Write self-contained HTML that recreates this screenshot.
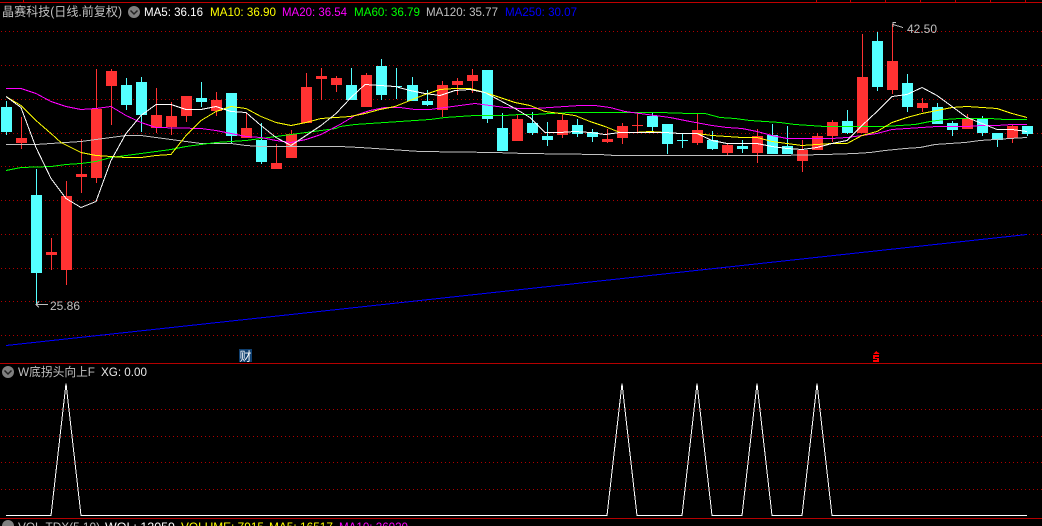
<!DOCTYPE html>
<html><head><meta charset="utf-8"><style>
html,body{margin:0;padding:0;background:#000;width:1042px;height:526px;overflow:hidden}
svg{display:block}
text{font-family:"Liberation Sans","WenQuanYi Zen Hei","Noto Sans CJK SC",sans-serif;font-size:12px}
</style></head><body>
<svg width="1042" height="526" viewBox="0 0 1042 526" xmlns="http://www.w3.org/2000/svg">
<rect width="1042" height="526" fill="#000"/>
<g shape-rendering="crispEdges">
<path fill="#c00000" d="M0 2h1042v1H0zM23 0h1v2h-1zM816 0h1v2h-1zM850 0h1v2h-1zM885 0h1v2h-1zM920 0h1v2h-1zM955 0h1v2h-1zM990 0h1v2h-1zM1025 0h1v2h-1z"/>
<path fill="#b40000" d="M0 363h1042v1H0zM0 518h1042v1H0z"/>
<g stroke="#b00000" stroke-width="1" stroke-dasharray="1 3">
<path d="M1 31.5H1042M1 65.5H1042M1 99.5H1042M1 133.5H1042M1 166.5H1042M1 200.5H1042M1 234.5H1042M1 268.5H1042M1 301.5H1042M1 335.5H1042M1 409.5H1042M1 436.5H1042M1 462.5H1042M1 489.5H1042"/>
</g>
<path fill="#54ffff" d="M1 107h11v25h-11zM6 101h1v34h-1zM31 195h11v78h-11zM36 169h1v135h-1zM121 85h11v20h-11zM126 78h1v32h-1zM136 82h11v33h-11zM141 77h1v55h-1zM196 98h11v4h-11zM201 82h1v25h-1zM226 93h11v43h-11zM231 93h1v50h-1zM256 140h11v22h-11zM261 123h1v41h-1zM346 85h11v15h-11zM351 68h1v32h-1zM376 66h11v29h-11zM381 59h1v41h-1zM391 86h11v1h-11zM396 68h1v31h-1z"/>
<path fill="#54ffff" transform="translate(1 0)" d="M406 85h11v16h-11zM411 77h1v24h-1zM421 101h11v4h-11zM426 90h1v16h-1zM481 70h11v49h-11zM486 70h1v53h-1zM496 128h11v23h-11zM501 113h1v38h-1zM526 123h11v10h-11zM531 112h1v23h-1zM541 136h11v4h-11zM546 122h1v24h-1zM571 125h11v9h-11zM576 119h1v18h-1zM586 132h11v5h-11zM591 129h1v13h-1zM646 116h11v11h-11zM651 112h1v19h-1zM661 124h11v20h-11zM666 124h1v30h-1zM676 140h11v1h-11zM681 133h1v15h-1zM706 140h11v9h-11zM711 131h1v19h-1zM736 146h11v3h-11zM741 140h1v13h-1zM766 135h11v19h-11zM771 124h1v30h-1zM781 146h11v8h-11zM786 126h1v28h-1zM841 121h11v12h-11zM846 110h1v24h-1zM871 41h11v46h-11zM876 32h1v59h-1zM901 83h11v24h-11zM906 74h1v38h-1zM931 107h11v17h-11zM936 103h1v21h-1zM946 123h11v7h-11zM951 121h1v15h-1zM976 119h11v14h-11zM981 116h1v20h-1zM991 133h11v7h-11zM996 133h1v14h-1zM1021 126h11v8h-11zM1026 126h1v10h-1z"/>
<path fill="#ff3232" d="M16 138h11v5h-11zM21 117h1v32h-1zM46 252h11v3h-11zM51 238h1v32h-1zM61 196h11v74h-11zM66 181h1v104h-1zM76 174h11v3h-11zM81 139h1v54h-1zM91 109h11v69h-11zM96 69h1v114h-1zM106 71h11v15h-11zM111 69h1v56h-1zM151 115h11v13h-11zM156 88h1v45h-1zM166 116h11v11h-11zM171 102h1v33h-1zM181 96h11v20h-11zM186 96h1v26h-1zM211 100h11v11h-11zM216 92h1v24h-1zM241 128h11v10h-11zM246 113h1v25h-1zM271 163h11v6h-11zM276 144h1v25h-1zM286 134h11v24h-11zM291 130h1v28h-1zM301 87h11v36h-11zM306 73h1v50h-1zM316 76h11v3h-11zM321 68h1v32h-1zM331 78h11v7h-11zM336 76h1v16h-1zM361 75h11v32h-11zM366 73h1v34h-1z"/>
<path fill="#ff3232" transform="translate(1 0)" d="M436 85h11v25h-11zM441 81h1v36h-1zM451 81h11v4h-11zM456 78h1v17h-1zM466 75h11v6h-11zM471 69h1v24h-1zM511 119h11v22h-11zM516 115h1v26h-1zM556 120h11v15h-11zM561 115h1v23h-1zM601 139h11v3h-11zM606 129h1v14h-1zM616 126h11v12h-11zM621 123h1v21h-1zM631 125h11v1h-11zM636 112h1v21h-1zM691 130h11v13h-11zM696 113h1v32h-1zM721 145h11v8h-11zM726 144h1v11h-1zM751 136h11v17h-11zM756 129h1v34h-1zM796 150h11v11h-11zM801 140h1v32h-1zM811 136h11v14h-11zM816 133h1v17h-1zM826 122h11v14h-11zM831 120h1v22h-1zM856 77h11v56h-11zM861 34h1v99h-1zM886 61h11v29h-11zM891 24h1v70h-1zM916 103h11v5h-11zM921 98h1v14h-1zM961 118h11v11h-11zM966 114h1v15h-1zM1006 126h11v12h-11zM1011 125h1v18h-1z"/>
<g fill="none" stroke-width="1">
<polyline stroke="#0000ff" points="6,345.5 1027,234.5"/>
<polyline stroke="#c0c0c0" points="6,144.5 36,144.5 51,143.5 66,142.5 81,141.5 96,139.5 111,137.5 126,135.5 141,135.5 156,137.5 171,139.5 186,141.5 201,143.5 231,143.5 246,145.5 261,146.5 340,146.5 360,147.5 375,148.5 390,149.5 405,150.5 420,151.5 495,152.5 525,153.5 600,154.5 615,155.5 690,155.5 780,155.5 825,154.5 855,153.5 870,152.5 885,150.5 905,148.5 920,147.5 935,144.5 950,143.5 965,142.5 980,140.5 995,139.5 1010,138.5 1027,137.5"/>
<polyline stroke="#00ff00" points="6,170.5 21,167.5 51,166.5 66,164.5 81,163.5 96,161.5 111,157.5 126,155.5 141,153.5 156,151.5 171,149.5 186,146.5 201,144.5 216,142.5 246,140.5 261,138.5 276,136.5 291,134.5 306,132.5 321,130.5 336,128.5 340,126.5 355,124.5 370,123.5 385,122.5 400,121.5 415,120.5 430,119.5 445,117.5 460,116.5 475,115.5 505,115.5 520,114.5 535,114.5 550,113.5 570,112.5 660,112.5 690,113.5 705,113.5 720,117.5 735,118.5 750,120.5 765,121.5 780,122.5 795,124.5 810,125.5 825,126.5 885,126.5 900,125.5 915,124.5 930,121.5 945,119.5 960,118.5 990,118.5 1005,119.5 1027,119.5"/>
<polyline stroke="#ff00ff" points="6,88.5 21,88.5 36,93.5 51,101.5 66,106.5 81,109.5 96,108.5 111,106.5 126,115.5 141,122.5 156,127.5 201,128.5 216,130.5 231,133.5 246,136.5 261,137.5 276,140.5 291,142.5 306,139.5 321,134.5 340,124.5 355,115.5 370,110.5 385,107.5 400,107.5 415,109.5 430,109.5 445,107.5 460,105.5 475,103.5 490,105.5 505,107.5 520,108.5 535,108.5 550,107.5 565,106.5 580,105.5 595,105.5 610,107.5 625,111.5 640,113.5 655,115.5 670,117.5 690,121.5 712,125.5 727,127.5 742,128.5 757,131.5 772,135.5 787,138.5 832,138.5 847,137.5 862,135.5 877,133.5 892,129.5 907,128.5 922,127.5 937,126.5 967,126.5 982,125.5 997,125.5 1012,124.5 1027,124.5"/>
<polyline stroke="#ffff00" points="6,96.5 21,105.5 36,120.5 51,133.5 61,142.5 81,152.5 96,155.5 111,156.5 126,157.5 141,157.5 156,155.5 171,154.5 186,135.5 201,120.5 216,111.5 231,106.5 246,108.5 261,116.5 276,122.5 291,125.5 306,122.5 321,118.5 336,117.5 350,116.5 365,113.5 380,109.5 395,106.5 410,100.5 425,94.5 440,89.5 455,88.5 470,88.5 485,92.5 500,97.5 515,102.5 530,105.5 545,111.5 560,113.5 575,115.5 590,121.5 605,126.5 620,132.5 635,132.5 650,131.5 665,132.5 680,133.5 697,133.5 712,135.5 727,136.5 742,137.5 757,137.5 772,141.5 787,143.5 802,145.5 817,144.5 832,143.5 847,143.5 862,135.5 877,131.5 892,122.5 907,117.5 922,113.5 937,110.5 952,107.5 967,106.5 982,107.5 997,108.5 1012,113.5 1027,117.5"/>
<polyline stroke="#ffffff" points="6,96.5 21,107.5 36,147.5 51,178.5 66,198.5 81,207.5 96,201.5 111,160.5 126,133.5 141,115.5 156,104.5 171,104.5 186,109.5 201,109.5 216,106.5 231,111.5 246,112.5 261,125.5 276,137.5 291,145.5 306,135.5 321,125.5 336,113.5 351,97.5 365,84.5 380,85.5 395,86.5 410,90.5 425,93.5 440,95.5 455,90.5 470,89.5 485,92.5 500,100.5 515,108.5 530,117.5 545,132.5 560,132.5 575,131.5 590,132.5 605,134.5 620,132.5 665,132.5 680,133.5 697,133.5 712,140.5 727,143.5 742,143.5 757,143.5 772,146.5 787,148.5 802,149.5 817,147.5 832,143.5 847,140.5 862,125.5 877,111.5 892,96.5 907,94.5 922,87.5 937,95.5 952,106.5 967,117.5 982,123.5 997,129.5 1012,129.5 1027,131.5"/>
<polyline stroke="#ffffff" points="6,515.5 51,515.5 66,383.5 81,515.5 607,515.5 622,383.5 637,515.5 682,515.5 697,383.5 712,515.5 742,515.5 757,383.5 772,515.5 802,515.5 817,383.5 832,515.5 1027,515.5"/>
<path stroke="#c0c0c0" d="M36 304.5H48M39 301.5L36 304.5L39 307.5M893 24.5L903 27.5M896 22.5H893V27"/>
</g>
<rect x="239" y="349" width="13" height="13" fill="#0f3f6f"/>
<path fill="#ff0000" d="M876 351l-3 3h7z"/>
<path fill="#ff0000" d="M873 355h6v2h-4v1h4v4h-6v-2h4v-1h-4z"/>
</g>
<text x="2" y="16" fill="#c0c0c0" style="font-size:12.500px" textLength="120" lengthAdjust="spacingAndGlyphs">晶赛科技(日线.前复权)</text>
<circle cx="134" cy="12" r="6" fill="#808080"/>
<path d="M130.500 10.500L134 14L137.500 10.500" stroke="#222" stroke-width="1.500" fill="none"/>
<text x="144" y="16" fill="#ffffff" textLength="59" lengthAdjust="spacingAndGlyphs">MA5: 36.16</text>
<text x="210" y="16" fill="#ffff00" textLength="66" lengthAdjust="spacingAndGlyphs">MA10: 36.90</text>
<text x="282" y="16" fill="#ff00ff" textLength="65" lengthAdjust="spacingAndGlyphs">MA20: 36.54</text>
<text x="354" y="16" fill="#00ff00" textLength="66" lengthAdjust="spacingAndGlyphs">MA60: 36.79</text>
<text x="426" y="16" fill="#c0c0c0" textLength="72" lengthAdjust="spacingAndGlyphs">MA120: 35.77</text>
<text x="505" y="16" fill="#0000ff" textLength="72" lengthAdjust="spacingAndGlyphs">MA250: 30.07</text>
<text x="907" y="33" fill="#c0c0c0" textLength="30" lengthAdjust="spacingAndGlyphs">42.50</text>
<text x="50" y="310" fill="#c0c0c0" textLength="30" lengthAdjust="spacingAndGlyphs">25.86</text>
<text x="239.500" y="360.500" fill="#ffffff" style="font-size:12px">财</text>
<circle cx="8" cy="372" r="6" fill="#808080"/>
<path d="M4.500 370.500L8 374L11.500 370.500" stroke="#222" stroke-width="1.500" fill="none"/>
<text x="18" y="376" fill="#c0c0c0" textLength="77" lengthAdjust="spacingAndGlyphs">W底拐头向上F</text>
<text x="101" y="376" fill="#e8e8e8" textLength="46" lengthAdjust="spacingAndGlyphs">XG: 0.00</text>
<circle cx="8" cy="526" r="6" fill="#808080"/>
<text x="18" y="531" fill="#c0c0c0" textLength="82" lengthAdjust="spacingAndGlyphs">VOL-TDX(5,10)</text>
<text x="105" y="531" fill="#ffffff" textLength="70" lengthAdjust="spacingAndGlyphs">WOL: 12059</text>
<text x="181" y="531" fill="#ffff00" textLength="83" lengthAdjust="spacingAndGlyphs">VOLUME: 7915</text>
<text x="269" y="531" fill="#ffff00" textLength="64" lengthAdjust="spacingAndGlyphs">MA5: 16517</text>
<text x="339" y="531" fill="#ff00ff" textLength="69" lengthAdjust="spacingAndGlyphs">MA10: 26020</text>
</svg>
</body></html>
